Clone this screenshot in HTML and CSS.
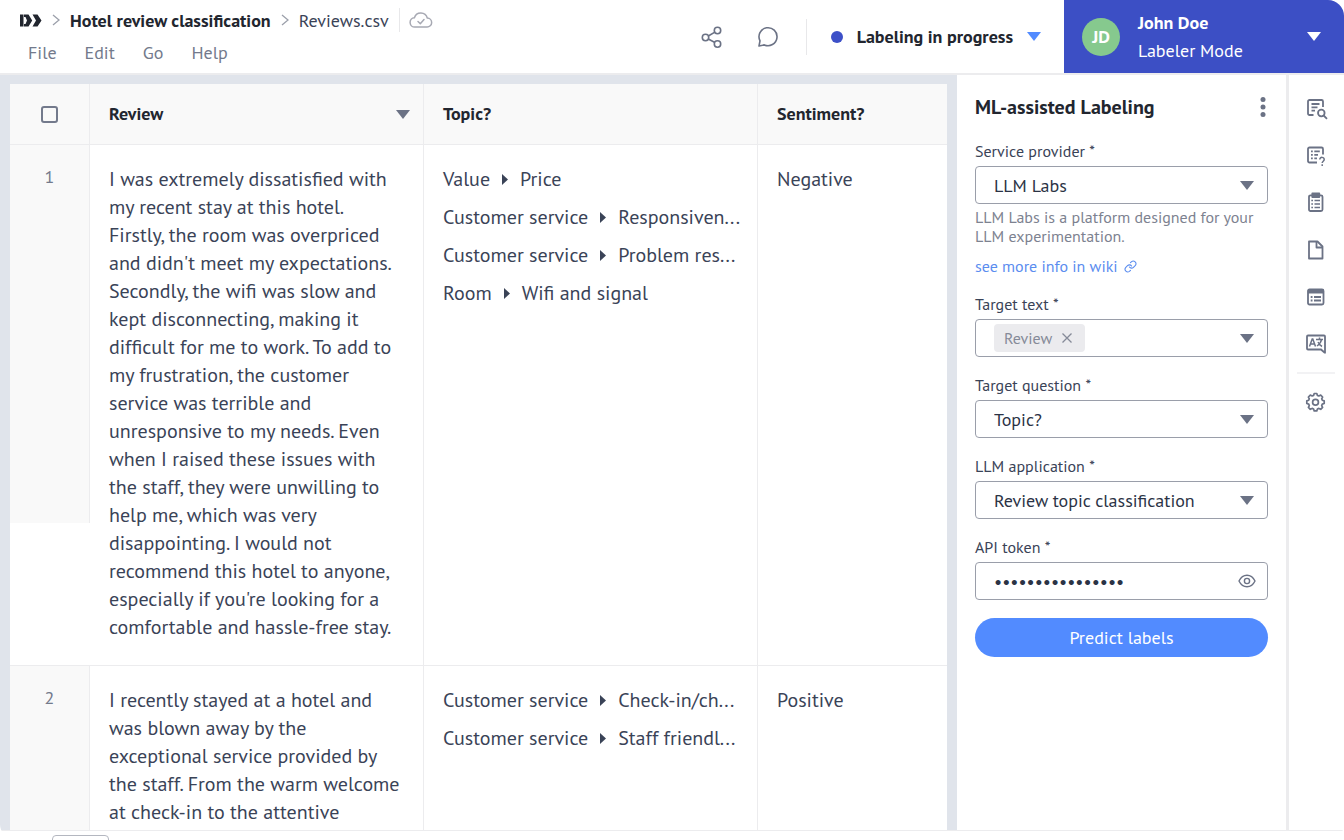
FILE: index.html
```
<!DOCTYPE html>
<html lang="en">
<head>
    <meta charset="UTF-8">
    <meta name="viewport" content="width=device-width, initial-scale=1.0">
    <title>Hotel review classification - Reviews.csv</title>
    <link rel="stylesheet" href="styles.css">
</head>
<body>
    <!-- Shared icons -->
    <svg class="sprite" aria-hidden="true">
        <symbol id="caret" viewBox="0 0 14 9"><path d="M0 0h14L7 9z" fill="currentColor"/></symbol>
        <symbol id="chevron" viewBox="0 0 8 12"><path d="M1 1l6 5-6 5" fill="none" stroke="currentColor" stroke-width="1.3"/></symbol>
        <symbol id="arrow" viewBox="0 0 6 11"><path d="M0 0l6 5.500-6 5.500z" fill="currentColor"/></symbol>
    </svg>

    <div class="app">
        <header class="header">
            <div class="header-left">
                <nav class="breadcrumb" aria-label="Breadcrumb">
                    <a href="#" class="logo" aria-label="Home">
                        <svg width="22" height="13" viewBox="0 0 22 13" fill="currentColor"><path d="M0 .5h3.500v12H0z"/><path d="M4 .5h4.500l3.700 6-3.700 6H4v-2.500h1.500l1.500-3.500-1.500-3.500H4z"/><path d="M12.500.5h5l4 6-4 6h-5l3.500-6z"/></svg>
                    </a>
                    <svg class="sep" width="8" height="12"><use href="#chevron"/></svg>
                    <a href="#" class="project">Hotel review classification</a>
                    <svg class="sep" width="8" height="12"><use href="#chevron"/></svg>
                    <a href="#" class="file">Reviews.csv</a>
                    <span class="saved">
                        <svg width="24" height="18" viewBox="0 0 24 18" fill="none" stroke="currentColor" stroke-width="1.500" stroke-linecap="round" stroke-linejoin="round"><path d="M6 16a4.600 4.600 0 0 1-.6-9.200A6.700 6.700 0 0 1 18.300 7 4.500 4.500 0 0 1 18 16z"/><path d="M9 10.500l2.300 2.200L15 8.500"/></svg>
                    </span>
                </nav>
                <nav class="menu" aria-label="Main menu">
                    <button type="button">File</button>
                    <button type="button">Edit</button>
                    <button type="button">Go</button>
                    <button type="button">Help</button>
                </nav>
            </div>

            <div class="header-actions">
                <button type="button" class="icon-btn" aria-label="Share">
                    <svg width="24" height="24" viewBox="0 0 24 24" fill="none" stroke="currentColor" stroke-width="1.600"><circle cx="5.500" cy="12.500" r="3.200"/><circle cx="17.500" cy="5.500" r="3.200"/><circle cx="17.500" cy="19" r="3.200"/><path d="M8.300 11l6.600-3.900M8.300 14l6.600 3.500"/></svg>
                </button>
                <button type="button" class="icon-btn" aria-label="Comments">
                    <svg width="24" height="24" viewBox="0 0 24 24" fill="none" stroke="currentColor" stroke-width="1.600" stroke-linejoin="round"><path d="M3 21l1-5.200a9 9 0 1 1 4.300 4.100z"/></svg>
                </button>
                <button type="button" class="status">
                    <span class="status-dot"></span>
                    Labeling in progress
                    <svg width="14" height="9"><use href="#caret"/></svg>
                </button>
            </div>

            <button type="button" class="user">
                <span class="avatar">JD</span>
                <span class="user-info">
                    <strong>John Doe</strong>
                    <span>Labeler Mode</span>
                </span>
                <svg width="14" height="9"><use href="#caret"/></svg>
            </button>
        </header>

        <div class="workspace">
            <main class="grid">
                <table>
                    <colgroup>
                        <col class="col-number">
                        <col class="col-review">
                        <col class="col-topic">
                        <col>
                    </colgroup>
                    <thead>
                        <tr>
                            <th class="check"><input type="checkbox" aria-label="Select all rows"></th>
                            <th>
                                <div class="th-sort">Review <svg width="14" height="9"><use href="#caret"/></svg></div>
                            </th>
                            <th>Topic?</th>
                            <th>Sentiment?</th>
                        </tr>
                    </thead>
                    <tbody>
                        <tr>
                            <td class="number"><div>1</div></td>
                            <td>I was extremely dissatisfied with my recent stay at this hotel. Firstly, the room was overpriced and didn't meet my expectations. Secondly, the wifi was slow and kept disconnecting, making it difficult for me to work. To add to my frustration, the customer service was terrible and unresponsive to my needs. Even when I raised these issues with the staff, they were unwilling to help me, which was very disappointing. I would not recommend this hotel to anyone, especially if you're looking for a comfortable and hassle-free stay.</td>
                            <td>
                                <ul class="topics">
                                    <li>Value <svg width="6" height="11"><use href="#arrow"/></svg> Price</li>
                                    <li>Customer service <svg width="6" height="11"><use href="#arrow"/></svg> Responsiven...</li>
                                    <li>Customer service <svg width="6" height="11"><use href="#arrow"/></svg> Problem res...</li>
                                    <li>Room <svg width="6" height="11"><use href="#arrow"/></svg> Wifi and signal</li>
                                </ul>
                            </td>
                            <td>Negative</td>
                        </tr>
                        <tr>
                            <td class="number"><div>2</div></td>
                            <td>I recently stayed at a hotel and was blown away by the exceptional service provided by the staff. From the warm welcome at check-in to the attentive</td>
                            <td>
                                <ul class="topics">
                                    <li>Customer service <svg width="6" height="11"><use href="#arrow"/></svg> Check-in/ch...</li>
                                    <li>Customer service <svg width="6" height="11"><use href="#arrow"/></svg> Staff friendl...</li>
                                </ul>
                            </td>
                            <td>Positive</td>
                        </tr>
                    </tbody>
                </table>
            </main>

            <aside class="panel">
                <div class="panel-head">
                    <h2>ML-assisted Labeling</h2>
                    <button type="button" class="kebab" aria-label="More options">
                        <svg width="6" height="20" viewBox="0 0 6 20" fill="currentColor"><circle cx="3" cy="2.500" r="2.500"/><circle cx="3" cy="10" r="2.500"/><circle cx="3" cy="17.500" r="2.500"/></svg>
                    </button>
                </div>

                <form class="panel-form">
                    <div class="field">
                        <label for="provider">Service provider *</label>
                        <div class="control">
                            <select id="provider"><option>LLM Labs</option></select>
                            <svg class="control-icon" width="14" height="9"><use href="#caret"/></svg>
                        </div>
                        <p class="hint">LLM Labs is a platform designed for your LLM experimentation.</p>
                        <a href="#" class="wiki">see more info in wiki
                            <svg width="13" height="13" viewBox="0 0 24 24" fill="none" stroke="currentColor" stroke-width="2" stroke-linecap="round"><path d="M10 13a5 5 0 0 0 7.500.5l3.500-3.500a5 5 0 0 0-7-7l-2 2"/><path d="M14 11a5 5 0 0 0-7.500-.5L3 14a5 5 0 0 0 7 7l2-2"/></svg>
                        </a>
                    </div>
                    <div class="field">
                        <label for="target-text">Target text *</label>
                        <div class="control has-chip">
                            <span class="chip">Review
                                <button type="button" aria-label="Remove Review">
                                    <svg width="10" height="10" viewBox="0 0 10 10" stroke="currentColor" stroke-width="1.300"><path d="M.5.5l9 9M9.500.5l-9 9"/></svg>
                                </button>
                            </span>
                            <select id="target-text"><option></option></select>
                            <svg class="control-icon" width="14" height="9"><use href="#caret"/></svg>
                        </div>
                    </div>
                    <div class="field">
                        <label for="target-question">Target question *</label>
                        <div class="control">
                            <select id="target-question"><option>Topic?</option></select>
                            <svg class="control-icon" width="14" height="9"><use href="#caret"/></svg>
                        </div>
                    </div>
                    <div class="field">
                        <label for="application">LLM application *</label>
                        <div class="control">
                            <select id="application"><option>Review topic classification</option></select>
                            <svg class="control-icon" width="14" height="9"><use href="#caret"/></svg>
                        </div>
                    </div>
                    <div class="field">
                        <label for="token">API token *</label>
                        <div class="control">
                            <input id="token" type="password" value="abcdefgh12345678">
                            <button type="button" class="reveal" aria-label="Show token">
                                <svg width="18" height="14" viewBox="0 0 18 14" fill="none" stroke="currentColor" stroke-width="1.400"><path d="M1 7c1.800-3.700 4.500-5.800 8-5.800S15.200 3.300 17 7c-1.800 3.700-4.500 5.800-8 5.800S2.800 10.700 1 7z"/><circle cx="9" cy="7" r="2.600"/></svg>
                            </button>
                        </div>
                    </div>
                    <button type="submit" class="predict">Predict labels</button>
                </form>
            </aside>

            <nav class="rail" aria-label="Tools">
                <button type="button" aria-label="Search document">
                    <svg width="24" height="24" viewBox="0 0 24 24" fill="none" stroke="currentColor" stroke-width="1.800"><path d="M9.500 18H5.500a1.500 1.500 0 0 1-1.500-1.500v-12A1.500 1.500 0 0 1 5.500 3h12A1.500 1.500 0 0 1 19 4.500V10"/><path d="M7.500 7h8M7.500 10.300h6M7.500 13.600h3.500"/><circle cx="17.300" cy="16" r="3.300"/><path d="M19.700 18.500l3.300 3.300"/></svg>
                </button>
                <button type="button" aria-label="Questions">
                    <svg width="24" height="24" viewBox="0 0 24 24" fill="none" stroke="currentColor" stroke-width="1.800"><path d="M13 18.500H5.500A1.500 1.500 0 0 1 4 17V5a1.500 1.500 0 0 1 1.500-1.500h12A1.500 1.500 0 0 1 19 5v5.500"/><path d="M7 7.300h1.800M10.300 7.300h5.500M7 10.800h1.800M10.300 10.800H14M7 14.300h1.800M10.300 14.300H13"/><path d="M15.800 15.500c0-3 4.700-2.700 4.400.1-.1 1.600-2 1.700-2 3.400M18.200 20.300v1.700" stroke-width="1.500"/></svg>
                </button>
                <button type="button" aria-label="Tasks">
                    <svg width="24" height="24" viewBox="0 0 24 24" fill="none" stroke="currentColor" stroke-width="1.800"><rect x="5" y="4.300" width="13.500" height="15.700" rx="1.500"/><path d="M8.300 2.500h7v3.500h-7z" fill="currentColor" stroke-linejoin="round"/><path d="M7.300 9.500H9M10.500 9.500h5.500M7.300 13H9M10.500 13h5.500M7.300 16.500H9M10.500 16.500h5.500" stroke-width="1.500"/></svg>
                </button>
                <button type="button" aria-label="Document">
                    <svg width="24" height="24" viewBox="0 0 24 24" fill="none" stroke="currentColor" stroke-width="1.800" stroke-linejoin="round"><path d="M5 3.500h8.500l5 5v12H5z"/><path d="M12.500 4v5.500h5.500"/></svg>
                </button>
                <button type="button" aria-label="List">
                    <svg width="24" height="24" viewBox="0 0 24 24" fill="none" stroke="currentColor" stroke-width="1.800"><rect x="4" y="4.500" width="15.500" height="15" rx="1.500"/><path d="M4 6.500h15.500" stroke-width="4"/><path d="M6.700 12h1.800M10 12h7M6.700 15.500h1.800M10 15.500h7"/></svg>
                </button>
                <button type="button" aria-label="Language">
                    <svg width="24" height="24" viewBox="0 0 24 24" fill="none" stroke="currentColor" stroke-width="1.500"><path d="M20.500 20.500l-3.500-3H4A1 1 0 0 1 3 16.500v-12A1 1 0 0 1 4 3.500h16a1 1 0 0 1 1 1v16z" stroke-width="1.800"/><path d="M5.500 14.500l2.700-7.500h.6l2.700 7.500M6.500 12h4M12 7.500h7M15.500 5.500v2M17.500 7.500c-.5 3-2.300 5-4.500 6.500M14 10c1 2 2.200 3.500 4 4.500"/></svg>
                </button>
                <hr>
                <button type="button" aria-label="Settings">
                    <svg width="24" height="24" viewBox="0 0 24 24" fill="none" stroke="currentColor" stroke-width="1.700" stroke-linejoin="round"><path d="M10.200 3.500h2.600l.6 1.900 1.500.6 1.800-.9 1.900 1.900-.9 1.800.6 1.500 1.900.6v2.600l-1.900.6-.6 1.500.9 1.800-1.900 1.900-1.800-.9-1.500.6-.6 1.900h-2.600l-.6-1.900-1.500-.6-1.800.9-1.900-1.900.9-1.800-.6-1.500-1.900-.6v-2.600l1.900-.6.6-1.500-.9-1.800 1.900-1.900 1.800.9 1.500-.6z"/><circle cx="11.500" cy="12.200" r="2.900"/></svg>
                </button>
            </nav>
        </div>

        <footer class="footer">
            <button type="button" class="page-size" aria-label="Page size"></button>
        </footer>
    </div>
</body>
</html>
```
FILE: styles.css
```
* {
    box-sizing: border-box;
}
body {
    margin: 0;
    background: #fff;
    color: #3a4357;
    font-family: "PT Sans", "Noto Sans", sans-serif;
    font-size: 18px;
}
button, select, input {
    font: inherit;
    color: inherit;
    border: 0;
    padding: 0;
    margin: 0;
    background: none;
}
button {
    cursor: pointer;
}
a {
    color: inherit;
    text-decoration: none;
}
svg {
    display: block;
    flex: none;
}
.sprite {
    position: absolute;
    width: 0;
    height: 0;
}
.app {
    display: flex;
    flex-direction: column;
    height: 100vh;
    overflow: hidden;
    border-radius: 16px;
    background: #fff;
}

/* Header */
.header {
    display: flex;
    flex: none;
    height: 75px;
    border-bottom: 2px solid #ececee;
}
.header-left {
    display: flex;
    flex-direction: column;
    gap: 9px;
    padding: 8px 0 0 20px;
}
.breadcrumb {
    display: flex;
    align-items: center;
    gap: 10px;
    height: 24px;
    white-space: nowrap;
}
.logo, .project {
    color: #22262f;
}
.project {
    font-weight: bold;
}
.sep {
    color: #9ca0ab;
}
.saved {
    display: flex;
    align-items: center;
    height: 24px;
    padding-left: 9px;
    border-left: 1px solid #e8e8ea;
    color: #a7a9b3;
}
.menu {
    display: flex;
    gap: 28px;
    padding-left: 8px;
    line-height: 24px;
    color: #737a8c;
}
.header-actions {
    display: flex;
    align-items: center;
    margin-left: auto;
    padding-right: 23px;
    color: #6b7285;
}
.icon-btn {
    margin-right: 32px;
}
.icon-btn + .status {
    margin-left: -6px;
}
.status {
    display: flex;
    align-items: center;
    gap: 14px;
    height: 36px;
    padding-left: 24px;
    border-left: 1px solid #e8e8ea;
    color: #22262f;
    font-weight: bold;
    white-space: nowrap;
}
.status-dot {
    width: 12px;
    height: 12px;
    border-radius: 50%;
    background: #3d50c8;
}
.status svg {
    color: #528bff;
}
.user {
    display: flex;
    align-items: center;
    width: 280px;
    padding: 0 23px 0 18px;
    background: #3c4fc5;
    color: #fff;
    text-align: left;
}
.avatar {
    width: 38px;
    height: 38px;
    border-radius: 50%;
    background: #86c98e;
    font-weight: bold;
    line-height: 38px;
    text-align: center;
}
.user-info {
    display: flex;
    flex: 1;
    flex-direction: column;
    padding-left: 18px;
    line-height: 28px;
}

/* Table */
.workspace {
    display: flex;
    flex: 1;
    min-height: 0;
}
.grid {
    flex: 1;
    min-width: 0;
    overflow: hidden;
    padding: 9px 10px 0;
    background: #e0e4eb;
}
table {
    width: 100%;
    background: #fff;
    border-collapse: separate;
    border-spacing: 0;
    table-layout: fixed;
}
.col-number {
    width: 80px;
}
.col-review, .col-topic {
    width: 334px;
}
th, td {
    padding: 20px 22px 24px 19px;
    border-right: 1px solid #ececee;
    border-bottom: 1px solid #ececee;
    font-size: 20px;
    line-height: 28px;
    text-align: left;
    vertical-align: top;
}
th:last-child, td:last-child {
    border-right: 0;
}
th {
    height: 61px;
    padding: 0 13px 0 19px;
    background: #f9f9f9;
    color: #22262f;
    font-size: 18px;
    vertical-align: middle;
}
.check {
    padding: 0;
}
.check input {
    display: block;
    width: 17px;
    height: 17px;
    margin: 0 auto;
    appearance: none;
    border: 2px solid #737a8c;
    border-radius: 3px;
}
.th-sort {
    display: flex;
    align-items: center;
    justify-content: space-between;
}
.th-sort svg {
    color: #6b7285;
}
.number {
    padding: 0;
    border-right: 0;
}
.number div {
    height: 378px;
    padding-top: 18px;
    border-right: 1px solid #ececee;
    background: #f9f9f9;
    color: #737a8c;
    font-size: 18px;
    text-align: center;
}
.topics {
    display: flex;
    flex-direction: column;
    gap: 10px;
    margin: 0;
    padding: 0;
    list-style: none;
    white-space: nowrap;
}
.topics li {
    display: flex;
    align-items: center;
    gap: 12px;
}

/* ML panel */
.panel {
    flex: none;
    width: 332px;
    padding: 20px 18px;
    border-right: 3px solid #ececee;
}
.panel-head {
    display: flex;
    align-items: center;
    justify-content: space-between;
    margin-bottom: 22px;
}
.panel-head h2 {
    margin: 0;
    color: #22262f;
    font-size: 20px;
    line-height: 24px;
}
.kebab {
    padding: 0 2px;
    color: #6b7285;
}
.panel-form {
    display: flex;
    flex-direction: column;
    gap: 18px;
}
.field {
    font-size: 16px;
}
.field label {
    display: block;
    margin-bottom: 5px;
    line-height: 20px;
}
.control {
    position: relative;
    display: flex;
    align-items: center;
    height: 38px;
    border: 1px solid #9a9eaa;
    border-radius: 4px;
}
.control select, .control input {
    flex: 1;
    min-width: 0;
    height: 36px;
    padding: 0 40px 0 18px;
    appearance: none;
    font-size: 18px;
    color: #2b3345;
}
.control-icon {
    position: absolute;
    right: 13px;
    color: #6b7285;
    pointer-events: none;
}
.has-chip {
    padding-left: 18px;
}
.chip {
    display: flex;
    align-items: center;
    gap: 10px;
    height: 28px;
    padding: 0 13px 0 10px;
    border-radius: 4px;
    background: #ebebee;
    color: #858a98;
}
.reveal {
    position: absolute;
    right: 11px;
    color: #6b7285;
}
.hint {
    margin: 4px 0 10px;
    color: #7d8290;
    line-height: 19px;
}
.wiki {
    display: flex;
    align-items: center;
    gap: 6px;
    color: #5b8def;
    line-height: 20px;
}
.predict {
    height: 39px;
    border-radius: 20px;
    background: #528bff;
    color: #fff;
}

/* Tool rail */
.rail {
    display: flex;
    flex: none;
    flex-direction: column;
    align-items: center;
    gap: 23px;
    width: 55px;
    padding: 22px 2px 0 0;
    color: #6b7285;
}
.rail hr {
    width: 38px;
    height: 2px;
    margin: -7px 0;
    border: 0;
    background: #f2f2f4;
}

/* Footer */
.footer {
    flex: none;
    height: 10px;
    overflow: hidden;
    padding: 4px 52px 0;
    border-top: 1px solid #ececee;
}
.page-size {
    width: 57px;
    height: 28px;
    border: 1px solid #b4b7c0;
    border-radius: 4px;
}
```
